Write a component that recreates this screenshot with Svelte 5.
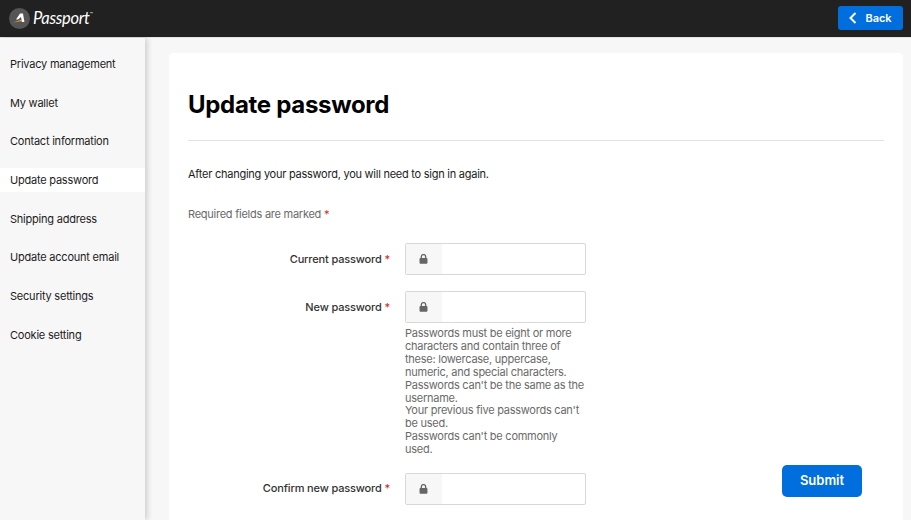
<script>
  const nav = ['Privacy management','My wallet','Contact information','Update password','Shipping address','Update account email','Security settings','Cookie setting'];
  const hint = ['Passwords must be eight or more characters and contain three of these: lowercase, uppercase, numeric, and special characters.',"Passwords can't be the same as the username.","Your previous five passwords can't be used.","Passwords can't be commonly used."];
</script>

{#snippet field(label, hints)}
  <div class="row">
    <div class="label">{label} <span class="req">*</span></div>
    <div class="control">
      <div class="input">
        <div class="addon">
          <svg width="9" height="10" viewBox="0 0 10 11"><path d="M2.6 4.5V3a2.4 2.4 0 0 1 4.8 0v1.5" fill="none" stroke="#666" stroke-width="1.5"/><rect x="0.6" y="4.4" width="8.8" height="6.4" rx="1" fill="#666"/></svg>
        </div>
      </div>
      {#if hints}
        <div class="hint">{#each hints as h}<div>{h}</div>{/each}</div>
      {/if}
    </div>
  </div>
{/snippet}

<div class="page">
  <header>
    <div class="logo">
      <svg width="21" height="21" viewBox="0 0 21 21">
        <circle cx="10.5" cy="10.5" r="10.5" fill="#555"/>
        <path d="M11 5.5h3l1.4 8.5h-2.6l-.8-5-3 2.6H7z" fill="#fff"/>
        <path d="M4 14.4l9-2.8v1.4z" fill="#e8a33a"/>
      </svg>
      <span class="brand">Passport</span><span class="tm">™</span>
    </div>
    <button class="back">
      <svg width="8" height="12" viewBox="0 0 8 12"><path d="M6.5 1L1.5 6l5 5" fill="none" stroke="#fff" stroke-width="2"/></svg>
      Back
    </button>
  </header>
  <div class="body">
    <nav>
      {#each nav as n, i}
        <div class="item" class:active={i === 3}>{n}</div>
      {/each}
    </nav>
    <main>
      <section class="card">
        <h1>Update password</h1>
        <p class="intro">After changing your password, you will need to sign in again.</p>
        <p class="required">Required fields are marked <span class="req">*</span></p>
        <div class="formwrap">
          <div class="form">
            {@render field('Current password')}
            {@render field('New password', hint)}
            {@render field('Confirm new password')}
          </div>
          <button class="submit">Submit</button>
        </div>
      </section>
    </main>
  </div>
</div>

<style>
  :global(body) { margin: 0; }
  .page { width: 911px; height: 520px; overflow: hidden; font-family: Inter, "Liberation Sans", sans-serif; color: #1c1c1c; background: #f7f7f7; display: flex; flex-direction: column; }
  header { height: 38px; flex: none; background: #212121; display: flex; align-items: center; justify-content: space-between; padding: 0 8px 0 9px; box-sizing: border-box; border-bottom: 1px solid #e4e4e4; }
  .logo { display: flex; align-items: center; color: #fff; margin-top: -1px; }
  .brand { font-family: Lato, sans-serif; font-style: italic; font-weight: 400; font-size: 16.5px; margin-left: 3px; letter-spacing: -0.3px; }
  .tm { font-size: 5px; align-self: flex-start; margin-top: 3px; }
  .back { width: 65px; height: 24px; margin-top: -1px; border: 0; border-radius: 3px; background: #006edc; color: #fff; font: 600 11px Inter, sans-serif; display: flex; align-items: center; justify-content: center; gap: 8px; padding: 0; }
  .body { flex: 1; display: flex; min-height: 0; }
  nav { width: 145px; flex: none; box-sizing: border-box; padding-top: 14px; background: #f7f7f7; box-shadow: 2px 0 6px rgba(0,0,0,.18); }
  .item { height: 24px; margin-bottom: 14.7px; padding-left: 10px; display: flex; align-items: center; font-size: 11px; letter-spacing: -0.22px; }
  .active { background: #fff; }
  main { flex: 1; padding: 15px 8px 0 24px; min-width: 0; }
  .card { background: #fff; border-radius: 4px; height: 480px; box-sizing: border-box; padding: 0 19px; }
  h1 { margin: 0; padding: 37px 0 20px; font-size: 24px; line-height: 30px; font-weight: 700; letter-spacing: -0.3px; color: #000; border-bottom: 1px solid #e2e2e2; }
  .intro { margin: 26px 0 0; font-size: 11px; line-height: 14px; letter-spacing: -0.25px; }
  .required { margin: 26px 0 0; font-size: 11px; line-height: 14px; color: #6a6a6a; letter-spacing: -0.25px; }
  .req { color: #c8321e; }
  .formwrap { display: flex; justify-content: space-between; align-items: flex-end; margin-top: 22px; padding-right: 22px; }
  .form { display: flex; flex-direction: column; gap: 16px; }
  .row { display: flex; }
  .label { width: 202px; text-align: right; font-size: 11px; font-weight: 500; line-height: 32px; letter-spacing: -0.15px; color: #333; }
  .row:last-child .label { line-height: 30px; }
  .control { width: 181px; margin-left: 15px; }
  .input { height: 32px; box-sizing: border-box; border: 1px solid #d8d8d8; border-radius: 2px; background: #fff; display: flex; }
  .addon { width: 36px; background: #f7f7f7; display: flex; align-items: center; justify-content: center; padding-right: 1px; box-sizing: border-box; }
  .hint { margin-top: 4px; margin-bottom: 0.6px; font-size: 11px; line-height: 12.9px; color: #6a6a6a; letter-spacing: -0.25px; }
  .submit { width: 80px; height: 32px; margin-bottom: 8px; border: 0; border-radius: 5px; background: #006edc; color: #fff; font: 600 13px Inter, sans-serif; padding: 0 0 2px; }
</style>
